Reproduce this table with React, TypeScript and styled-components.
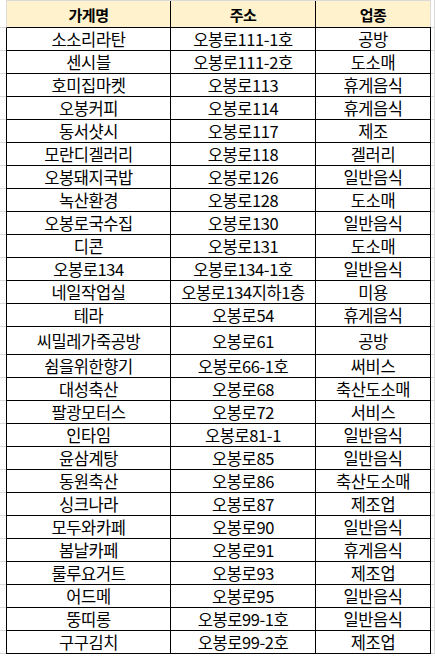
import styled, { createGlobalStyle } from 'styled-components'

interface Store {
  name: string,
  address: string,
  category: string,
  tall?: boolean
}

const stores: Store[] = [
  { name: '소소리라탄', address: '오봉로111-1호', category: '공방' },
  { name: '센시블', address: '오봉로111-2호', category: '도소매' },
  { name: '호미집마켓', address: '오봉로113', category: '휴게음식' },
  { name: '오봉커피', address: '오봉로114', category: '휴게음식' },
  { name: '동서샷시', address: '오봉로117', category: '제조' },
  { name: '모란디겔러리', address: '오봉로118', category: '겔러리' },
  { name: '오봉돼지국밥', address: '오봉로126', category: '일반음식' },
  { name: '녹산환경', address: '오봉로128', category: '도소매' },
  { name: '오봉로국수집', address: '오봉로130', category: '일반음식' },
  { name: '디콘', address: '오봉로131', category: '도소매' },
  { name: '오봉로134', address: '오봉로134-1호', category: '일반음식' },
  { name: '네일작업실', address: '오봉로134지하1층', category: '미용' },
  { name: '테라', address: '오봉로54', category: '휴게음식' },
  { name: '씨밀레가죽공방', address: '오봉로61', category: '공방', tall: true },
  { name: '쉼을위한향기', address: '오봉로66-1호', category: '써비스' },
  { name: '대성축산', address: '오봉로68', category: '축산도소매' },
  { name: '팔광모터스', address: '오봉로72', category: '서비스' },
  { name: '인타임', address: '오봉로81-1', category: '일반음식' },
  { name: '윤삼계탕', address: '오봉로85', category: '일반음식' },
  { name: '동원축산', address: '오봉로86', category: '축산도소매' },
  { name: '싱크나라', address: '오봉로87', category: '제조업' },
  { name: '모두와카페', address: '오봉로90', category: '일반음식' },
  { name: '봄날카페', address: '오봉로91', category: '휴게음식' },
  { name: '룰루요거트', address: '오봉로93', category: '제조업' },
  { name: '어드메', address: '오봉로95', category: '일반음식' },
  { name: '뚱띠롱', address: '오봉로99-1호', category: '일반음식' },
  { name: '구구김치', address: '오봉로99-2호', category: '제조업' }
]

const GlobalStyle = createGlobalStyle`
  body {
    margin: 0;
    background: #ffffff;
    font-family: 'Noto Sans CJK KR', 'Noto Sans', sans-serif;
    color: #000000;
  }
`

const Sheet = styled.div`
  width: 435px;
  display: flex;
  flex-direction: column;
`

const Line = styled.div<{ $height: number }>`
  display: flex;
  height: ${p => p.$height}px;
`

const Gutter = styled.div<{ $side: 'left' | 'right' }>`
  box-sizing: border-box;
  width: ${p => (p.$side === 'left' ? 6 : 4)}px;
  border-bottom: 1px solid #dadada;
  ${p => p.$side === 'right' && 'border-right: 1px solid #dadada;'}
`

const Row = styled.div<{ $header?: boolean }>`
  box-sizing: border-box;
  display: grid;
  grid-template-columns: 164px 145px 115px;
  width: 425px;
  border-left: 1px solid ${p => (p.$header ? '#dadada' : '#000')};
  border-bottom: 1px solid #000;
  border-top: ${p => (p.$header ? '1px solid #dadada' : 'none')};
  background: ${p => (p.$header ? '#fff2cc' : '#ffffff')};
`

const Cell = styled.div<{ $header?: boolean, $last?: boolean }>`
  display: flex;
  align-items: center;
  justify-content: center;
  border-right: 1px solid ${p => (p.$last && p.$header ? '#dadada' : '#000')};
  font-size: ${p => (p.$header ? 15 : 16.5)}px;
  font-weight: ${p => (p.$header ? 700 : 400)};
  letter-spacing: ${p => (p.$header ? -0.5 : -0.4)}px;
  white-space: nowrap;
  line-height: 1;
  padding-top: 1px;
`

const App = () => {
  return (
    <Sheet>
      <GlobalStyle />
      <Line $height={28}>
        <Gutter $side="left" />
        <Row $header>
          <Cell $header>가게명</Cell>
          <Cell $header>주소</Cell>
          <Cell $header $last>업종</Cell>
        </Row>
        <Gutter $side="right" />
      </Line>
      {stores.map(store => (
        <Line key={store.name} $height={store.tall ? 28 : 23}>
          <Gutter $side="left" />
          <Row>
            <Cell>{store.name}</Cell>
            <Cell>{store.address}</Cell>
            <Cell $last>{store.category}</Cell>
          </Row>
          <Gutter $side="right" />
        </Line>
      ))}
    </Sheet>
  )
}

export default App
